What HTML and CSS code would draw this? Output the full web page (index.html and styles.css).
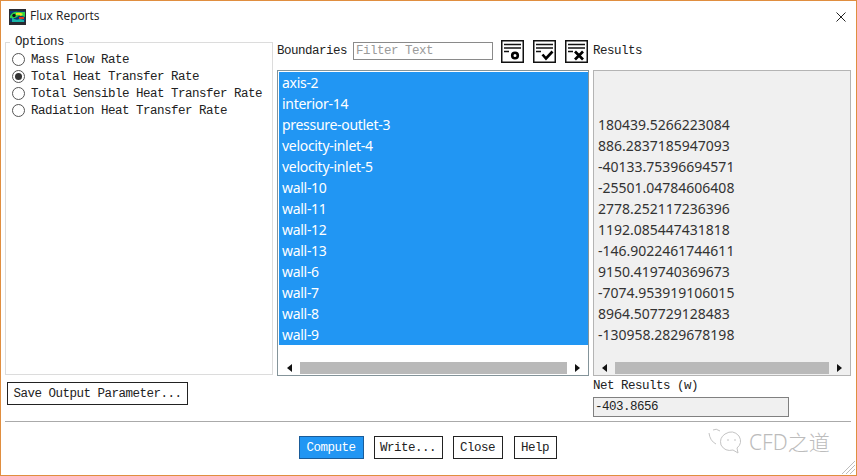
FILE: index.html
```html
<!DOCTYPE html>
<html lang="en">
<head>
<meta charset="utf-8">
<title>Flux Reports</title>
<link rel="stylesheet" href="styles.css">
</head>
<body>
<div class="window">
  <header class="titlebar">
    <svg class="app-icon" width="17" height="16" viewBox="0 0 17 16">
      <rect width="17" height="16" fill="#2a2a30"/>
      <rect x="1" y="2" width="15" height="11" fill="#0c3a78"/>
      <path d="M1 7 Q4 2 9 3 L16 3 V8 Q10 5 8 8 Q5 10 1 9Z" fill="#2fd04a"/>
      <path d="M7 4 Q11 3 14 5 L12 7 Q9 5 7 6Z" fill="#f2e21c"/>
      <path d="M3 8 Q6 12 11 10 L15 11 L15 13 L3 13Z" fill="#18b4a8"/>
      <circle cx="5" cy="6.5" r="1.7" fill="#101010"/>
      <rect x="10" y="8" width="5" height="2" fill="#e0321c"/>
    </svg>
    <span class="title-text">Flux Reports</span>
    <svg class="close-icon" width="10" height="10" viewBox="0 0 10 10">
      <path d="M0.5 0.5 L9.5 9.5 M9.5 0.5 L0.5 9.5" stroke="#222" stroke-width="1" fill="none"/>
    </svg>
  </header>

  <main class="panel-grid">
    <fieldset class="options">
      <legend class="options-legend">Options</legend>
      <div class="radio-row"><span class="radio"></span><span>Mass Flow Rate</span></div>
      <div class="radio-row"><span class="radio radio-on"></span><span>Total Heat Transfer Rate</span></div>
      <div class="radio-row"><span class="radio"></span><span>Total Sensible Heat Transfer Rate</span></div>
      <div class="radio-row"><span class="radio"></span><span>Radiation Heat Transfer Rate</span></div>
    </fieldset>

    <div class="boundaries-head">
      <span class="mono-label">Boundaries</span>
      <div class="filter-input">Filter Text</div>
      <div class="tool-icons">
        <svg class="tool-icon" width="23" height="23" viewBox="0 0 23 23">
          <rect x="0.75" y="0.75" width="21.5" height="21.5" fill="#fff" stroke="#111" stroke-width="1.5"/>
          <path d="M3 4.5 H20 M3 8 H20 M3 11.5 H8" stroke="#111" stroke-width="1.6" fill="none"/>
          <circle cx="14" cy="15.5" r="2.8" fill="none" stroke="#000" stroke-width="2.6"/>
        </svg>
        <svg class="tool-icon" width="23" height="23" viewBox="0 0 23 23">
          <rect x="0.75" y="0.75" width="21.5" height="21.5" fill="#fff" stroke="#111" stroke-width="1.5"/>
          <path d="M3 4.5 H20 M3 8 H20 M3 11.5 H8" stroke="#111" stroke-width="1.6" fill="none"/>
          <path d="M9.5 14.5 L13 18.5 L19.5 11.5" stroke="#000" stroke-width="2.6" fill="none"/>
        </svg>
        <svg class="tool-icon" width="23" height="23" viewBox="0 0 23 23">
          <rect x="0.75" y="0.75" width="21.5" height="21.5" fill="#fff" stroke="#111" stroke-width="1.5"/>
          <path d="M3 4.5 H20 M3 8 H20 M3 11.5 H8" stroke="#111" stroke-width="1.6" fill="none"/>
          <path d="M10 11.5 L18 19.5 M18 11.5 L10 19.5" stroke="#000" stroke-width="2.7" fill="none"/>
        </svg>
      </div>
    </div>
    <div class="results-head"><span class="mono-label">Results</span></div>

    <section class="list-box">
      <ul class="rows rows-selected">
        <li>axis-2</li>
        <li>interior-14</li>
        <li>pressure-outlet-3</li>
        <li>velocity-inlet-4</li>
        <li>velocity-inlet-5</li>
        <li>wall-10</li>
        <li>wall-11</li>
        <li>wall-12</li>
        <li>wall-13</li>
        <li>wall-6</li>
        <li>wall-7</li>
        <li>wall-8</li>
        <li>wall-9</li>
      </ul>
      <div class="hscroll">
        <span class="arrow arrow-left"></span>
        <span class="thumb"></span>
        <span class="arrow arrow-right"></span>
      </div>
    </section>

    <section class="list-box results-box">
      <ul class="rows rows-values">
        <li></li>
        <li></li>
        <li>180439.5266223084</li>
        <li>886.2837185947093</li>
        <li>-40133.75396694571</li>
        <li>-25501.04784606408</li>
        <li>2778.252117236396</li>
        <li>1192.085447431818</li>
        <li>-146.9022461744611</li>
        <li>9150.419740369673</li>
        <li>-7074.953919106015</li>
        <li>8964.507729128483</li>
        <li>-130958.2829678198</li>
      </ul>
      <div class="hscroll">
        <span class="arrow arrow-left"></span>
        <span class="thumb"></span>
        <span class="arrow arrow-right"></span>
      </div>
    </section>

    <div class="save-cell"><div class="btn btn-save">Save Output Parameter...</div></div>
    <div class="net-cell">
      <div class="mono-label net-label">Net Results (w)</div>
      <div class="net-value">-403.8656</div>
    </div>
  </main>

  <hr class="separator">

  <footer class="actions">
    <div class="btn btn-primary">Compute</div>
    <div class="btn btn-write">Write...</div>
    <div class="btn btn-close">Close</div>
    <div class="btn btn-help">Help</div>
  </footer>

  <div class="watermark">
    <svg width="36" height="28" viewBox="0 0 36 28">
      <g fill="none" stroke="#c4c4c4" stroke-width="1">
        <path d="M2 6 Q3 14 9 17"/>
        <path d="M6 3 Q9 1 13 4"/>
        <path d="M18 7 Q26 2 32 9 Q36 16 30 21 L31 26 L26 23 Q18 25 14 18 Q12 11 18 7Z"/>
        <path d="M20 13 h2 M27 13 h2"/>
      </g>
    </svg>
    <span class="watermark-text">CFD之道</span>
  </div>

  <svg class="grip" width="17" height="17" viewBox="0 0 17 17">
    <path d="M16 3 L3 16 M16 7 L7 16 M16 11 L11 16" stroke="#bdbdbd" stroke-width="1" fill="none"/>
  </svg>
</div>
</body>
</html>
```

FILE: styles.css
```css
* { box-sizing: border-box; }

html, body {
  margin: 0;
  padding: 0;
  background: #fff;
}

.window {
  position: relative;
  width: 857px;
  height: 476px;
  border: 1px solid #e08e3f;
  background: #fff;
  color: #222;
  font-family: "Liberation Mono", monospace;
  font-size: 12.5px;
  letter-spacing: -0.5px;
  overflow: hidden;
}

.titlebar {
  height: 34px;
  display: flex;
  align-items: center;
  padding: 0 10px 4px 8px;
}

.app-icon { flex: none; margin-top: 2px; }

.title-text {
  margin: -2px 0 0 4px;
  font-family: "Open Sans", sans-serif;
  font-size: 12px;
  letter-spacing: 0;
  color: #222;
}

.close-icon { margin-left: auto; margin-top: 1px; }

.panel-grid {
  display: grid;
  grid-template-columns: 268px 312px 258px;
  grid-template-rows: 35px 305px 46px;
  column-gap: 4px;
  padding-left: 4px;
}

.options {
  grid-column: 1;
  grid-row: 1 / span 2;
  margin: 0;
  padding: 2px 0 0 6px;
  min-width: 0;
  border: 1px solid #dcdcdc;
}

.options-legend {
  margin-left: -2px;
  padding: 0 5px;
  height: 14px;
  line-height: 14px;
}

.radio-row {
  display: flex;
  align-items: center;
  height: 17px;
  white-space: nowrap;
}

.radio {
  flex: none;
  width: 13px;
  height: 13px;
  margin-right: 6px;
  border: 1px solid #555;
  border-radius: 50%;
  background: #fff;
  display: flex;
  align-items: center;
  justify-content: center;
}

.radio-on::after {
  content: "";
  width: 7px;
  height: 7px;
  border-radius: 50%;
  background: #333;
}

.boundaries-head {
  display: flex;
  align-items: flex-start;
  padding-top: 5px;
}

.mono-label { line-height: 22px; white-space: nowrap; }

.filter-input {
  width: 140px;
  height: 18px;
  margin: 2px 0 0 6px;
  padding-left: 2px;
  border: 1px solid #8a8a8a;
  color: #9a9a9a;
  line-height: 17px;
}

.tool-icons {
  display: flex;
  gap: 9px;
  margin-left: 8px;
}

.tool-icon { display: block; }

.results-head { padding-top: 5px; }

.list-box {
  display: flex;
  flex-direction: column;
  height: 306px;
  border: 1px solid #84949a;
  padding: 1px 0 0 1px;
  background: #fff;
  font-family: "Noto Sans", sans-serif;
  font-size: 14px;
  letter-spacing: 0;
}

.results-box {
  background: #f0f0f0;
  border-color: #b4b4b4;
  padding-left: 0;
}

.rows {
  list-style: none;
  margin: 0;
  padding: 0;
  height: 273px;
}

.rows li {
  height: 21px;
  line-height: 21px;
  padding-left: 3px;
  white-space: nowrap;
}

.rows-selected { background: #2196f3; color: #fff; letter-spacing: -0.3px; }
.rows-values { color: #333; }
.rows-values li { padding-left: 4px; }

.hscroll {
  display: flex;
  align-items: center;
  height: 12px;
  margin-top: 17px;
  padding: 0 8px 0 8px;
}

.arrow {
  flex: none;
  width: 0;
  height: 0;
  border-top: 4px solid transparent;
  border-bottom: 4px solid transparent;
}

.arrow-left { border-right: 5px solid #111; margin-right: 8px; }
.arrow-right { border-left: 5px solid #111; margin-left: 8px; }

.thumb { flex: 1; height: 12px; background: #b9b9b9; }

.save-cell { grid-column: 1; padding: 7px 0 0 2px; }

.net-cell { grid-column: 3; padding-top: 4px; }

.net-label { line-height: 14px; }

.net-value {
  width: 196px;
  height: 20px;
  margin-top: 4px;
  padding-left: 1px;
  border: 1px solid #808080;
  background: #f0f0f0;
  line-height: 19px;
}

.btn {
  height: 23px;
  border: 1px solid #222;
  background: #fff;
  line-height: 23px;
  text-align: center;
  white-space: nowrap;
}

.btn-save { width: 181px; }
.btn-primary { width: 65px; background: #2196f3; color: #fff; border-color: #1a5c99; }
.btn-write { width: 69px; }
.btn-close { width: 50px; margin-right: 1px; }
.btn-help { width: 43px; }

.separator {
  margin: 0 0 0 4px;
  width: 846px;
  height: 1px;
  border: 0;
  background: #aaa;
}

.actions {
  display: flex;
  justify-content: center;
  gap: 10px;
  padding: 14px 2px 0 0;
}

.watermark {
  position: absolute;
  left: 706px;
  top: 425px;
  display: flex;
  align-items: center;
  gap: 6px;
  letter-spacing: 0;
}

.watermark-text {
  font-family: "Noto Sans", "Noto Sans CJK SC", sans-serif;
  font-size: 21px;
  font-weight: 300;
  color: #bcbcbc;
  white-space: nowrap;
}

.grip {
  position: absolute;
  right: 0;
  bottom: 0;
}
```
